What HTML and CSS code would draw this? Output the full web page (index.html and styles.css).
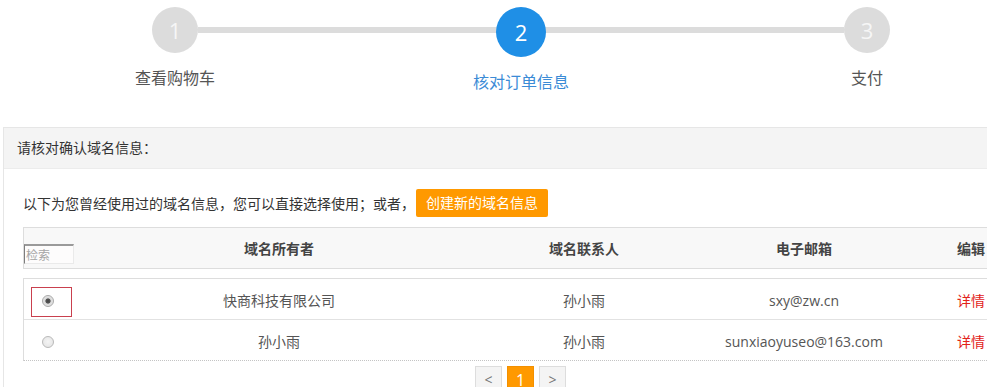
FILE: index.html
```html
<!DOCTYPE html>
<html lang="zh-CN">
<head>
<meta charset="utf-8">
<title>核对订单信息</title>
<link rel="stylesheet" href="styles.css">
</head>
<body>
<div class="steps">
  <div class="step"><span class="num">1</span><span class="label">查看购物车</span></div>
  <div class="bar"></div>
  <div class="step active"><span class="num">2</span><span class="label">核对订单信息</span></div>
  <div class="bar"></div>
  <div class="step"><span class="num">3</span><span class="label">支付</span></div>
</div>

<div class="panel">
  <div class="panel-head">请核对确认域名信息：</div>
  <div class="panel-body">
    <div class="intro">
      <span>以下为您曾经使用过的域名信息，您可以直接选择使用；或者，</span>
      <a class="btn-create">创建新的域名信息</a>
    </div>

    <div class="thead">
      <div class="cell search-cell"><input class="search" type="text" placeholder="检索"></div>
      <div class="cell">域名所有者</div>
      <div class="cell">域名联系人</div>
      <div class="cell">电子邮箱</div>
      <div class="cell">编辑</div>
    </div>

    <div class="tbody">
      <div class="row">
        <div class="sel on"><span class="radio checked"></span></div>
        <div class="cell">快商科技有限公司</div>
        <div class="cell">孙小雨</div>
        <div class="cell">sxy@zw.cn</div>
        <div class="cell"><a class="detail">详情</a></div>
      </div>
      <div class="row">
        <div class="sel"><span class="radio"></span></div>
        <div class="cell">孙小雨</div>
        <div class="cell">孙小雨</div>
        <div class="cell">sunxiaoyuseo@163.com</div>
        <div class="cell"><a class="detail">详情</a></div>
      </div>
    </div>

    <div class="pager">
      <span class="pg">&lt;</span>
      <span class="pg current">1</span>
      <span class="pg">&gt;</span>
    </div>
  </div>
</div>
</body>
</html>
```

FILE: styles.css
```css
* { box-sizing: border-box; }
html, body { overflow: hidden; }
body {
  margin: 0;
  background: #fff;
  font-family: "Open Sans", "Noto Sans CJK SC", sans-serif;
  font-size: 14px;
  color: #555;
}

/* steps */
.steps {
  display: flex;
  align-items: flex-start;
  width: 792px;
  margin-left: 125px;
  padding-top: 7px;
}
.step {
  width: 100px;
  display: flex;
  flex-direction: column;
  align-items: center;
  position: relative;
  z-index: 1;
}
.num {
  width: 46px;
  height: 46px;
  border-radius: 50%;
  background: #dcdcdc;
  color: #f6f6f6;
  font-size: 22px;
  line-height: 46px;
  text-align: center;
}
.active .num {
  width: 50px;
  height: 50px;
  line-height: 50px;
  background: #1f8fe6;
  color: #fff;
}
.label {
  margin-top: 14px;
  font-size: 16px;
  line-height: 22px;
  color: #555;
  white-space: nowrap;
}
.active .label { color: #3b8bd6; }
.bar {
  flex: 1;
  height: 6px;
  background: #dcdcdc;
  margin: 20px -27px 0;
}

/* panel */
.panel {
  width: 1040px;
  margin: 34px 0 0 3px;
  border: 1px solid #e6e6e6;
}
.panel-head {
  height: 41px;
  line-height: 40px;
  padding-left: 13px;
  background: #f4f4f4;
  border-bottom: 1px solid #ececec;
  color: #333;
  font-size: 14px;
}
.panel-body {
  padding: 20px 19px 30px;
}
.intro {
  display: flex;
  align-items: center;
  height: 28px;
  color: #333;
  font-size: 14px;
}
.btn-create {
  margin-left: 1px;
  height: 28px;
  line-height: 28px;
  padding: 0 10px;
  background: #ff9900;
  color: #fff;
  border-radius: 2px;
}

/* table */
.thead, .row {
  display: grid;
  grid-template-columns: 50px 410px 200px 240px 94px;
}
.thead {
  width: 1000px;
  height: 42px;
  margin-top: 10px;
  border: 1px solid #dddddd;
  background: #f8f8f8;
  align-items: center;
  font-weight: bold;
  color: #444;
}
.cell { text-align: center; white-space: nowrap; }
.search-cell {
  align-self: end;
  padding-bottom: 4px;
  text-align: left;
}
.search {
  display: block;
  width: 50px;
  height: 20px;
  margin: 0;
  padding: 0 0 0 1px;
  border-style: solid;
  border-width: 2px 1px 1px 1px;
  border-color: #9a9a9a #eaeaea #eaeaea #7d7d7d;
  background: #fdfcfc;
  font-family: "Noto Sans CJK SC", sans-serif;
  font-size: 12px;
  color: #555;
  outline: none;
}
.search::placeholder { color: #a5a5a5; }

.tbody {
  width: 1000px;
  margin-top: 9px;
  border-top: 1px solid #dddddd;
  border-left: 1px solid #dddddd;
  border-bottom: 1px dotted #c4c4c4;
}
.row {
  height: 41px;
  align-items: center;
  border-bottom: 1px solid #e2e2e2;
  color: #555;
}
.row:last-child { height: 40px; border-bottom: none; }
.row .cell { padding-top: 2px; }
.sel {
  align-self: start;
  width: 41px;
  height: 30px;
  margin: 8px 0 0 7px;
  padding: 7px 0 0 10px;
  border: 1px solid transparent;
}
.sel.on { border-color: #c9404e; }
.radio {
  display: block;
  width: 12px;
  height: 12px;
  border-radius: 50%;
  border: 1px solid #b9b9b9;
  background: radial-gradient(circle at 50% 45%, #f4f4f4 0, #e2e2e2 100%);
}
.radio.checked {
  border-color: #a9a9a9;
  background: radial-gradient(circle, #444 0, #555 2.2px, #dadada 3px, #eeeeee 100%);
}
.detail { color: #e2231a; }

/* pager */
.pager {
  display: flex;
  justify-content: center;
  gap: 5px;
  width: 995px;
  margin-top: 5px;
}
.pg {
  width: 27px;
  height: 28px;
  line-height: 26px;
  text-align: center;
  border: 1px solid #dddddd;
  background: #f4f4f4;
  color: #777;
  font-size: 14px;
}
.pg.current {
  background: #ff9900;
  border-color: #f39000;
  color: #fff;
  font-size: 16px;
}
```
